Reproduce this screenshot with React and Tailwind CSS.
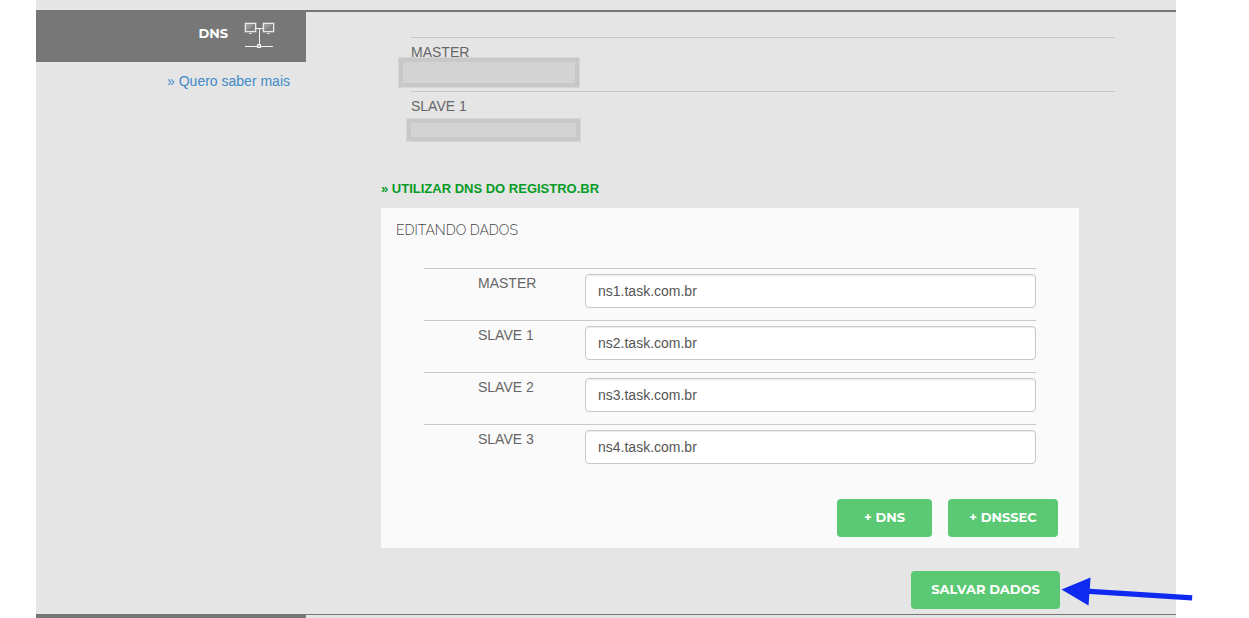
import React from "react";

const servers = [
  { id: "master", label: "MASTER", value: "ns1.task.com.br" },
  { id: "slave1", label: "SLAVE 1", value: "ns2.task.com.br" },
  { id: "slave2", label: "SLAVE 2", value: "ns3.task.com.br" },
  { id: "slave3", label: "SLAVE 3", value: "ns4.task.com.br" },
];

function NetworkIcon() {
  return (
    <svg width="32" height="28" viewBox="0 0 32 28" aria-hidden="true" className="shrink-0">
      <defs>
        <linearGradient id="screen" x1="0" y1="0" x2="1" y2="1">
          <stop offset="0" stopColor="#a8a8a8" />
          <stop offset="0.5" stopColor="#929292" />
          <stop offset="0.52" stopColor="#7c7c7c" />
          <stop offset="1" stopColor="#8a8a8a" />
        </linearGradient>
      </defs>
      <rect x="0" y="0" width="13" height="11" rx="1" fill="#999" />
      <rect x="18" y="0" width="13" height="11" rx="1" fill="#999" />
      <rect x="1.5" y="1.5" width="10" height="8" fill="url(#screen)" stroke="#e9e9e9" />
      <rect x="19.5" y="1.5" width="10" height="8" fill="url(#screen)" stroke="#e9e9e9" />
      <path d="M5 11.5h3M23 11.5h3" stroke="#d8d8d8" />
      <path d="M12 6.500h7M15.500 6.500v16M1 24.500h28" stroke="#f4f4f4" fill="none" />
      <rect x="13.500" y="22.500" width="3" height="3" fill="#b5b5b5" stroke="#f4f4f4" />
    </svg>
  );
}

function GreenButton({ children, className }) {
  return (
    <button
      type="button"
      className={`h-[38px] rounded-[4px] bg-[#5bc873] text-center font-[Montserrat,Inter,sans-serif] text-[13px] font-bold text-white ${className}`}
    >
      {children}
    </button>
  );
}

function FormRow({ id, label, value }) {
  return (
    <div className="flex h-[52px] items-start border-t border-[#c8c8c8] pt-[5px]">
      <label htmlFor={id} className="w-[161px] shrink-0 pl-[54px] leading-[18px]">
        {label}
      </label>
      <input
        id={id}
        type="text"
        defaultValue={value}
        className="h-[34px] min-w-0 flex-1 rounded-[4px] border border-[#c8c8c8] bg-white px-3 text-[14px] text-[#555] shadow-[inset_0_1px_1px_rgba(0,0,0,0.08)]"
      />
    </div>
  );
}

export default function App() {
  return (
    <div className="bg-white pr-[73px] pl-9 font-['Liberation_Sans',Arial,sans-serif] text-[14px] text-[#666]">
      <div className="bg-[#e5e5e5] pt-[10px]">
        <section className="flex border-b border-[#777]">
          <aside className="w-[270px] shrink-0">
            <div className="flex h-[52px] items-center justify-end gap-4 bg-[#777] pr-[30px]">
              <h2 className="pb-1 font-[Montserrat,Inter,sans-serif] text-[13px] font-bold text-white">DNS</h2>
              <NetworkIcon />
            </div>
            <p className="pt-[9px] pr-4 text-right leading-5">
              <a href="#saber-mais" className="text-[#428bca]">» Quero saber mais</a>
            </p>
          </aside>

          <div className="min-w-0 flex-1 border-t-2 border-[#777] pt-[25px] pb-[5px]">
            <dl className="mr-[61px] ml-[105px]">
              <div className="h-[54px] border-t border-[#c8c8c8] pt-1">
                <dt className="h-4 leading-5">MASTER</dt>
                <dd className="-ml-3 h-[29px] w-[180px] border-4 border-[#c8c8c8] bg-[#d3d3d3] outline outline-[#d6d6d6]" />
              </div>
              <div className="h-[54px] border-t border-[#c8c8c8] pt-1">
                <dt className="mb-[3px] leading-5">SLAVE 1</dt>
                <dd className="-ml-1 h-[22px] w-[173px] border-4 border-[#c8c8c8] bg-[#d3d3d3] outline outline-[#d6d6d6]" />
              </div>
            </dl>

            <div className="mt-[34px] mr-[97px] ml-[75px]">
              <a href="#registro" className="block text-[13px] leading-5 font-bold text-[#059c25]">
                » UTILIZAR DNS DO REGISTRO.BR
              </a>
              <form className="mt-[9px] bg-[#fafafa] pt-3 pb-[11px]">
                <h3 className="pl-[15px] font-[Raleway,Lato,sans-serif] text-[14px] leading-5 font-light text-[#444]">
                  EDITANDO DADOS
                </h3>
                <div className="mt-7 mr-[43px] ml-[43px]">
                  {servers.map((server) => (
                    <FormRow key={server.id} {...server} />
                  ))}
                </div>
                <div className="mt-[23px] flex justify-end gap-4 pr-[21px]">
                  <GreenButton className="w-[95px]">+ DNS</GreenButton>
                  <GreenButton className="w-[110px]">+ DNSSEC</GreenButton>
                </div>
              </form>
            </div>

            <div className="mt-[23px] mr-[116px] flex justify-end">
              <div className="relative">
                <GreenButton className="w-[149px]">SALVAR DADOS</GreenButton>
                <svg
                  width="134"
                  height="30"
                  viewBox="0 0 134 30"
                  aria-hidden="true"
                  className="absolute top-[6px] left-full"
                >
                  <path d="M1.500 12.500L30.500 0.500L29.800 11.800L132.300 18.300L132 23.500L29.400 17L28.500 28.500Z" fill="#1029f0" />
                </svg>
              </div>
            </div>
          </div>
        </section>
        <div className="h-[3px] w-[270px] bg-[#777]" />
      </div>
    </div>
  );
}
